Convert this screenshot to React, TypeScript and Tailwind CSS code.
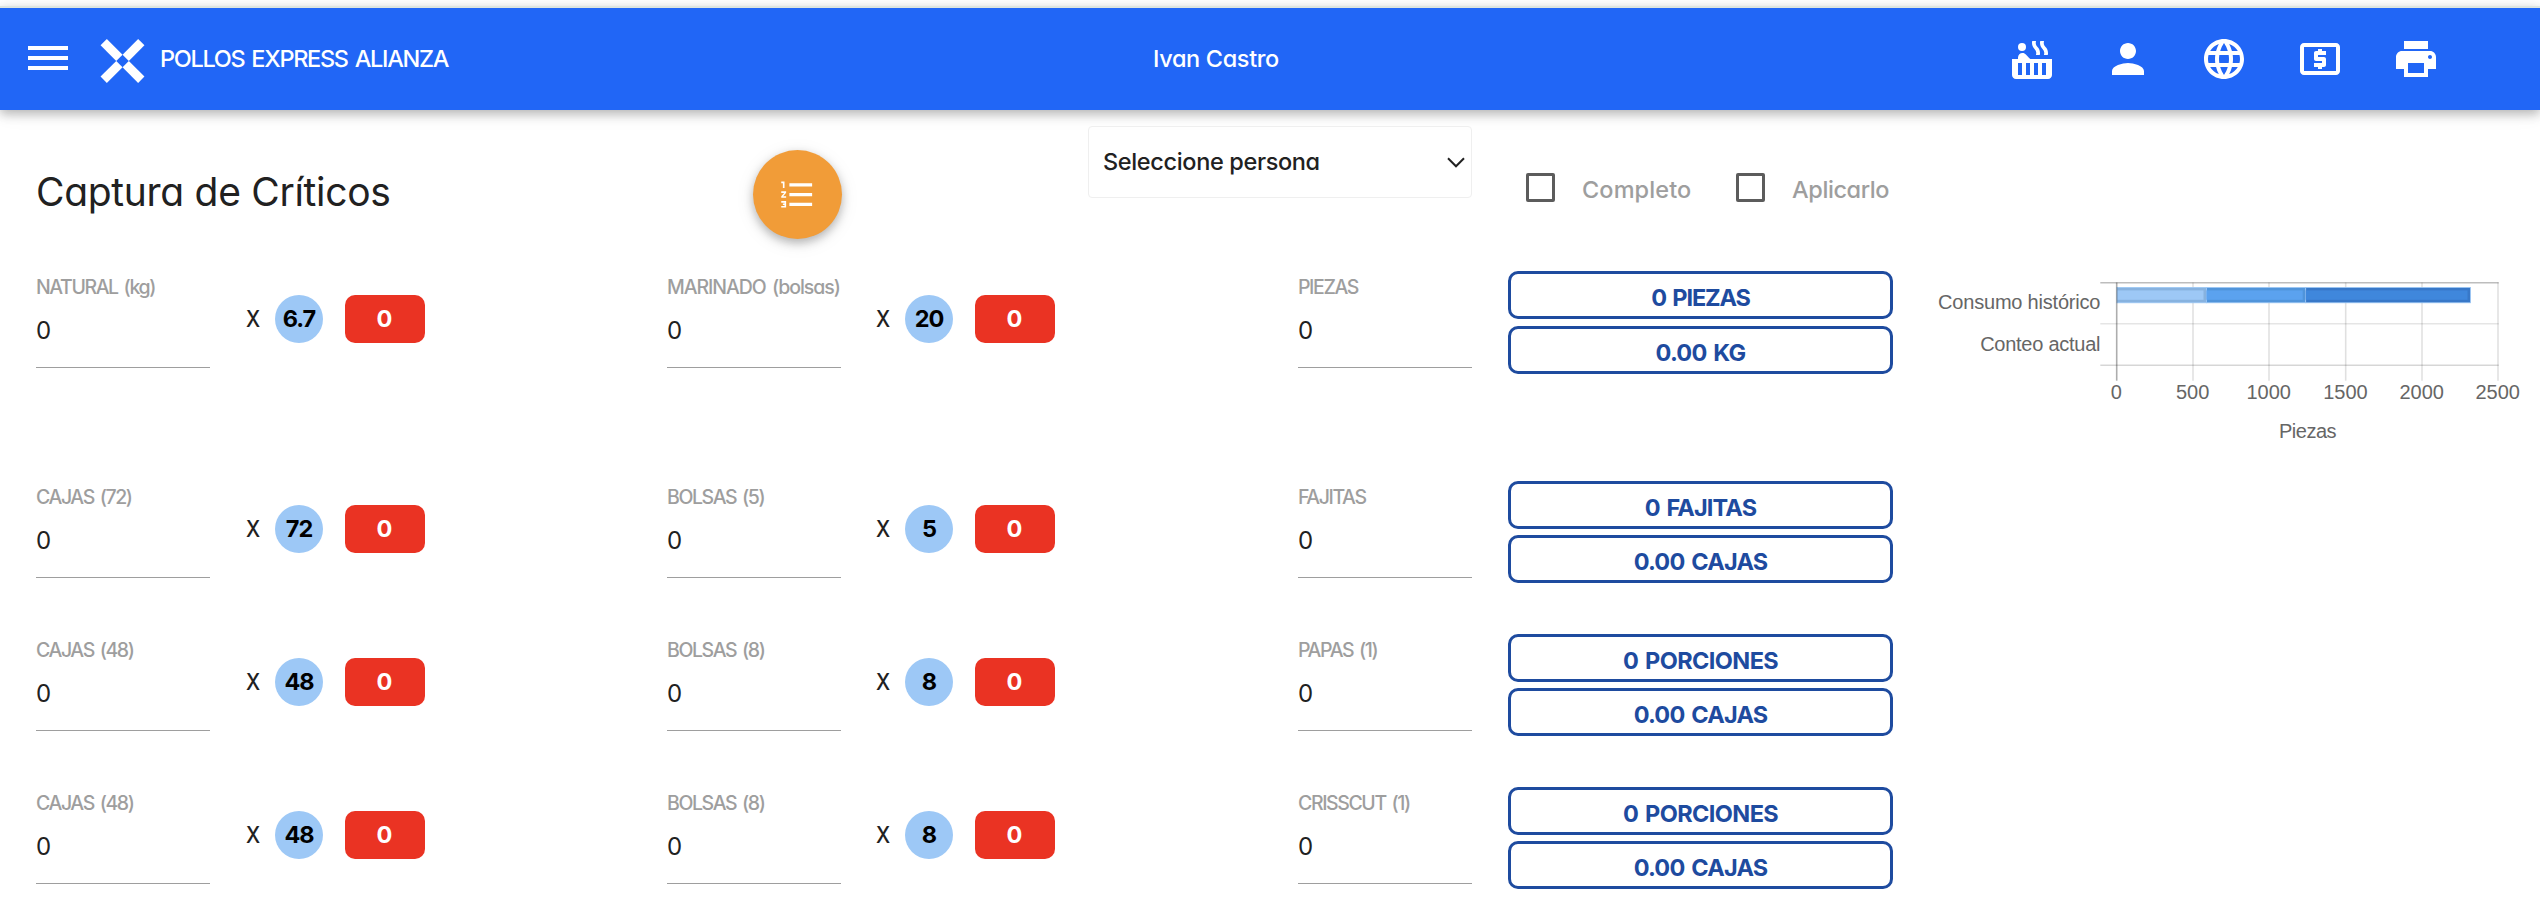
import React from "react";
import { MdFormatListNumbered, MdHotTub, MdLanguage, MdLocalAtm, MdPerson, MdPrint } from "react-icons/md";

type Field = { label: string; factor: string };
type Total = { text: string; tracking: string };
type Row = { height: string; gap: string; fields: Field[]; unit: string; totals: Total[] };

const ROWS: Row[] = [
  {
    height: "h-[210px]",
    gap: "gap-[7px]",
    fields: [
      { label: "NATURAL (kg)", factor: "6.7" },
      { label: "MARINADO (bolsas)", factor: "20" },
    ],
    unit: "PIEZAS",
    totals: [
      { text: "0 PIEZAS", tracking: "tracking-[-1.15px]" },
      { text: "0.00 KG", tracking: "tracking-[-0.75px]" },
    ],
  },
  {
    height: "h-[153px]",
    gap: "gap-[6px]",
    fields: [
      { label: "CAJAS (72)", factor: "72" },
      { label: "BOLSAS (5)", factor: "5" },
    ],
    unit: "FAJITAS",
    totals: [
      { text: "0 FAJITAS", tracking: "tracking-[-0.85px]" },
      { text: "0.00 CAJAS", tracking: "tracking-[-0.8px]" },
    ],
  },
  {
    height: "h-[153px]",
    gap: "gap-[6px]",
    fields: [
      { label: "CAJAS (48)", factor: "48" },
      { label: "BOLSAS (8)", factor: "8" },
    ],
    unit: "PAPAS (1)",
    totals: [
      { text: "0 PORCIONES", tracking: "tracking-[-0.6px]" },
      { text: "0.00 CAJAS", tracking: "tracking-[-0.8px]" },
    ],
  },
  {
    height: "h-[121px]",
    gap: "gap-[6px]",
    fields: [
      { label: "CAJAS (48)", factor: "48" },
      { label: "BOLSAS (8)", factor: "8" },
    ],
    unit: "CRISSCUT (1)",
    totals: [
      { text: "0 PORCIONES", tracking: "tracking-[-0.6px]" },
      { text: "0.00 CAJAS", tracking: "tracking-[-0.8px]" },
    ],
  },
];

function Logo() {
  return (
    <svg className="mt-1 ml-8 h-[44px] w-[45px] shrink-0" viewBox="0 0 44.5 44" fill="#fff">
      <path d="M0.3 6.3 6.6 0 22.3 15.7 16 22Z" />
      <path d="M44.2 6.3 37.9 0 22.3 15.7 28.6 22Z" />
      <path d="M0.3 37.6 6.6 44 22.3 28.3 16 22Z" />
      <path d="M44.2 37.6 37.9 44 22.3 28.3 28.6 22Z" />
    </svg>
  );
}

function Header() {
  return (
    <header className="mt-[6px] flex h-[104px] shrink-0 items-center border-t-2 border-[#dde5e0] bg-[#2166f6] text-white shadow-[0_4px_10px_rgba(0,0,0,0.26),0_4px_20px_rgba(0,0,0,0.06)]">
      <button className="-mt-[2px] ml-7 flex w-10 shrink-0 flex-col gap-[6px]" aria-label="Menú">
        <span className="h-1 bg-white" />
        <span className="h-1 bg-white" />
        <span className="h-1 bg-white" />
      </button>
      <Logo />
      <div className="-mt-px ml-[15px] w-[993px] shrink-0 text-[23.5px] font-medium tracking-[-1.3px] [word-spacing:2px]">
        POLLOS EXPRESS ALIANZA
      </div>
      <div className="-mt-px w-[855px] shrink-0 text-[23.5px] font-medium tracking-[-0.35px]">Ivan Castro</div>
      <nav className="flex gap-12 text-[48px]">
        <MdHotTub />
        <MdPerson />
        <MdLanguage />
        <MdLocalAtm />
        <MdPrint />
      </nav>
    </header>
  );
}

function Check({ label, className }: { label: string; className: string }) {
  return (
    <label className={`flex items-center text-[23.5px] font-medium text-[#9e9e9e] ${className}`}>
      <span className="mr-[27px] h-[29px] w-[29px] shrink-0 rounded-[2px] border-3 border-[#5c5c5c]" />
      <span className="mt-1">{label}</span>
    </label>
  );
}

function Toolbar() {
  return (
    <div className="flex h-[161px] shrink-0 items-start pl-9">
      <h1 className="mt-[57px] w-[717px] shrink-0 text-[39px] leading-[50px] tracking-[-0.3px] text-[#212121]">
        Captura de Críticos
      </h1>
      <button className="mt-10 flex h-[89px] w-[89px] shrink-0 items-center justify-center rounded-full bg-[#f19c38] text-[39px] text-white shadow-[0_4px_10px_rgba(0,0,0,0.26),0_4px_20px_rgba(0,0,0,0.08)]">
        <MdFormatListNumbered />
      </button>
      <div className="mt-4 ml-[246px] flex h-[72px] w-[384px] shrink-0 items-center justify-between rounded-[4px] border border-[#efefef] pr-[6px] pl-[14px] text-[23.5px] font-medium tracking-[-0.35px] text-[#212121]">
        <span className="-mt-px">Seleccione persona</span>
        <svg width="18" height="11" viewBox="0 0 18 11" fill="none" stroke="#212121" strokeWidth="2">
          <path d="M1 1.3 9 9.3 17 1.3" />
        </svg>
      </div>
      <Check label="Completo" className="mt-[58px] ml-[54px] w-[210px] tracking-[0.1px]" />
      <Check label="Aplicarlo" className="mt-[58px] tracking-[-0.4px]" />
    </div>
  );
}

function Input({ label }: { label: string }) {
  const tracking = label.startsWith("MARINADO") ? "tracking-[-1.05px]" : "tracking-[-1.4px]";
  return (
    <div className="h-[97px] w-[174px] shrink-0 border-b border-[#9e9e9e] pt-1 font-medium whitespace-nowrap">
      <div className={`text-[19.5px] leading-[24px] text-[#9e9e9e] [word-spacing:2px] ${tracking}`}>{label}</div>
      <div className="mt-[17px] text-[24px] leading-[29px] font-normal text-[#212121]">0</div>
    </div>
  );
}

function Multiplied({ field, inset }: { field: Field; inset: string }) {
  return (
    <div className="flex w-[631px] shrink-0 items-start">
      <Input label={field.label} />
      <div className={`mt-6 flex h-12 items-center text-[23.5px] ${inset}`}>
        <span className="w-[29px] text-[#212121]">
          <span className="inline-block origin-left scale-x-[0.86] font-medium">X</span>
        </span>
        <span className="flex h-12 w-12 items-center justify-center rounded-full bg-[#9dc8f6] font-bold tracking-[-1px] text-black">
          {field.factor}
        </span>
        <span className="ml-[22px] flex h-12 w-20 items-center justify-center rounded-[10px] bg-[#ea3323] pr-px font-bold text-white">
          0
        </span>
      </div>
    </div>
  );
}

const TICKS = [
  { x: 186.7, label: "0" },
  { x: 263, label: "500" },
  { x: 339, label: "1000" },
  { x: 415.7, label: "1500" },
  { x: 492, label: "2000" },
  { x: 568, label: "2500" },
];

const SEGMENTS = [
  { x: 187, end: 276.5, fill: "#9dc8f6", edge: "#87b2df" },
  { x: 276.5, end: 375.7, fill: "#5ba2ef", edge: "#5094da" },
  { x: 375.7, end: 540.5, fill: "#3f87dc", edge: "#3878c8" },
];

function Chart() {
  return (
    <svg
      className="ml-[37px] h-[190px] w-[610px] shrink-0 font-['Liberation_Sans',sans-serif]"
      viewBox="0 0 610 190"
      fontSize="20"
      fill="#666"
    >
      {TICKS.slice(1).map((t) => (
        <path key={t.label} d={`M${t.x} 11.5V109.7`} stroke="#000" strokeOpacity="0.12" strokeWidth="1.6" />
      ))}
      <path d="M170.3 52.7H568.7" stroke="#000" strokeOpacity="0.1" strokeWidth="1.6" />
      <path d="M170.3 94.2H568.7" stroke="#000" strokeOpacity="0.16" strokeWidth="1.6" />
      <path d="M170.3 11.7H568.7" stroke="#000" strokeOpacity="0.26" strokeWidth="1.6" />
      {SEGMENTS.map((s) => (
        <g key={s.x}>
          <rect x={s.x} y="16.4" width={s.end - s.x} height="15.4" fill={s.edge} stroke="#9dc8f6" strokeWidth="0.8" />
          <rect x={s.x} y="19.4" width={s.end - s.x - 3} height="9.4" fill={s.fill} />
        </g>
      ))}
      <path d="M186.7 11.5V109.7" stroke="#000" strokeOpacity="0.32" strokeWidth="1.6" />
      <text x="170.3" y="38.3" textAnchor="end" letterSpacing="-0.2">
        Consumo histórico
      </text>
      <text x="170.3" y="79.5" textAnchor="end" letterSpacing="-0.25">
        Conteo actual
      </text>
      {TICKS.map((t) => (
        <text key={t.label} x={t.x - 0.3} y="127.7" textAnchor="middle">
          {t.label}
        </text>
      ))}
      <text x="377.5" y="166.7" textAnchor="middle" letterSpacing="-0.5">
        Piezas
      </text>
    </svg>
  );
}

export default function App() {
  return (
    <div className="flex h-[908px] w-[2540px] flex-col overflow-hidden bg-white font-['Inter',sans-serif] [font-feature-settings:'cv11']">
      <Header />
      <Toolbar />
      <main className="flex flex-col pl-9">
        {ROWS.map((row, i) => (
          <section key={i} className={`flex items-start ${row.height}`}>
            <Multiplied field={row.fields[0]} inset="ml-9" />
            <Multiplied field={row.fields[1]} inset="ml-[35px]" />
            <Input label={row.unit} />
            <div className={`ml-9 flex w-[385px] shrink-0 flex-col ${row.gap}`}>
              {row.totals.map((t) => (
                <div
                  key={t.text}
                  className={`flex h-12 items-center justify-center rounded-[10px] border-3 border-[#1e4b9f] pt-[5px] text-[23.5px] leading-7 font-bold text-[#1e4b9f] [word-spacing:2px] ${t.tracking}`}
                >
                  {t.text}
                </div>
              ))}
            </div>
            {i === 0 && <Chart />}
          </section>
        ))}
      </main>
    </div>
  );
}
